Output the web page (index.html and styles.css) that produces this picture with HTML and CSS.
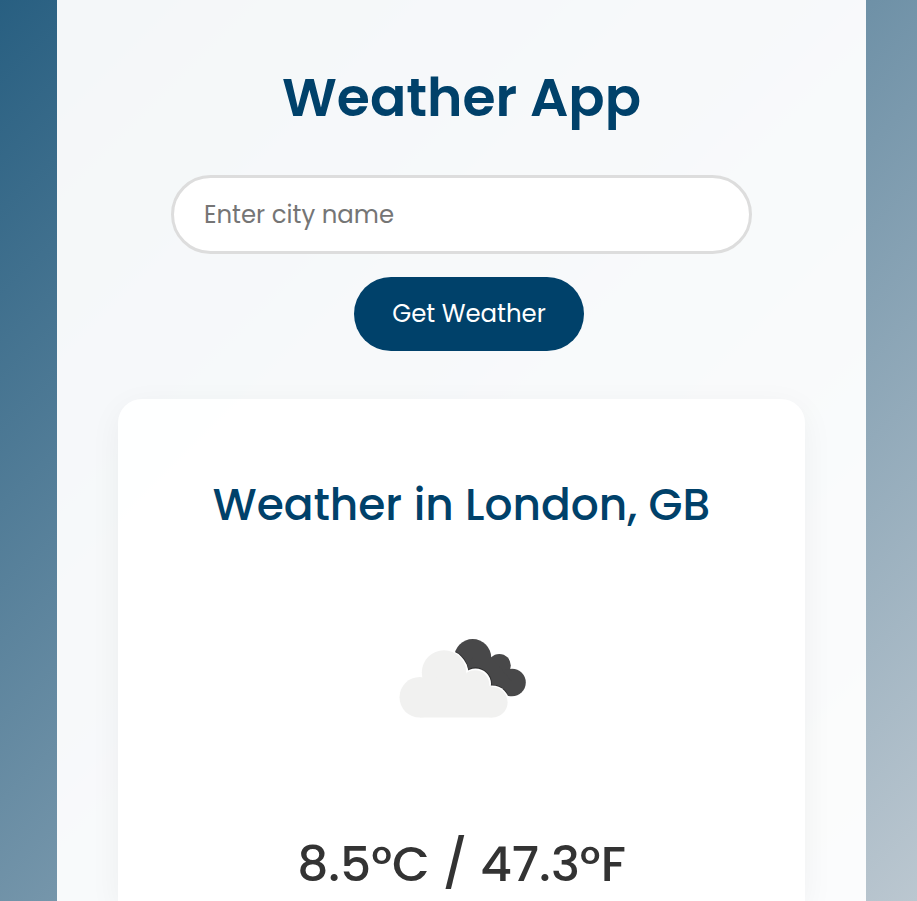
FILE: index.html
```html
<!DOCTYPE html>
<html lang="en">
<head>
<meta charset="utf-8">
<title>Weather App</title>
<link rel="stylesheet" href="styles.css">
</head>
<body>
<main class="container">
  <h1 class="title">Weather App</h1>
  <form class="search">
    <input class="city" type="text" placeholder="Enter city name" aria-label="City">
    <button class="submit" type="button">Get Weather</button>
  </form>
  <section class="card">
    <h2 class="place">Weather in London, GB</h2>
    <svg class="icon" viewBox="0 0 160 110" aria-hidden="true">
      <defs>
        <mask id="gap">
          <rect width="160" height="110" fill="#fff"/>
          <g fill="#000"><circle cx="64" cy="54" r="24.500"/><circle cx="95.500" cy="64" r="15.500"/><circle cx="112" cy="83" r="17.500"/></g>
        </mask>
      </defs>
      <g mask="url(#gap)" fill="#484849">
        <circle cx="92.700" cy="37.500" r="18.500"/>
        <circle cx="119.300" cy="45.500" r="11.500"/>
        <circle cx="132" cy="62.500" r="13.800"/>
        <path d="M93 37H110L119 46L132 62V76L110 75L80 52Z"/>
        <g fill="none" stroke="#2d2d2e" stroke-width="1.500">
          <path d="M75.500 32.200A24.500 24.500 0 0 1 88 50.300"/>
          <path d="M88 50.300A15.500 15.500 0 0 1 111 65.500"/>
          <path d="M111 65.500A17.500 17.500 0 0 1 127 74"/>
        </g>
      </g>
      <g fill="#f1f1f0">
        <circle cx="39.800" cy="77.300" r="20.300"/>
        <circle cx="64" cy="52.500" r="22.200"/>
        <circle cx="95" cy="64.500" r="14.300"/>
        <circle cx="112.300" cy="82.300" r="15.300"/>
        <path d="M40 97.600H112.500V67L85 55L45 58Z"/>
      </g>
    </svg>
    <p class="temp">8.5°C / 47.3°F</p>
  </section>
</main>
</body>
</html>
```
FILE: styles.css
```css
* { box-sizing: border-box; }
body {
  margin: 0;
  height: 901px;
  overflow: hidden;
  display: flex;
  font-family: Poppins, Inter, sans-serif;
  background: linear-gradient(135deg, #285f81, #bbc7d0);
}
.container {
  display: flex;
  flex-direction: column;
  width: 809px;
  height: 901px;
  margin-left: 57px;
  padding: 57px 61px 0;
  background: rgba(255, 255, 255, .95);
}
.title, .place, .temp {
  margin: 0;
  text-align: center;
  white-space: nowrap;
}
.title {
  height: 81px;
  font-size: 53.6px;
  font-weight: 600;
  line-height: 81px;
  color: #00416a;
}
.search {
  display: flex;
  flex-direction: column;
  align-items: center;
  margin-top: 37px;
}
.city {
  width: 581px;
  height: 79px;
  padding: 0 30px;
  border: 3px solid #ddd;
  border-radius: 40px;
  background: #fff;
  font: 400 24.4px Poppins, Inter, sans-serif;
}
.city::placeholder { color: #757575; }
.submit {
  width: 230px;
  height: 74px;
  margin: 23px 0 0 15px;
  padding: 0 0 1px;
  border: 0;
  border-radius: 37px;
  background: #00416a;
  color: #fff;
  font: 400 24.4px Poppins, Inter, sans-serif;
}
.card {
  flex: 1;
  margin-top: 48px;
  padding-top: 73px;
  display: flex;
  flex-direction: column;
  align-items: center;
  border-radius: 24px 24px 0 0;
  background: rgba(255, 255, 255, .9);
  box-shadow: 0 8px 32px rgba(0, 0, 0, .05);
}
.place {
  font-size: 43.9px;
  font-weight: 500;
  line-height: 66px;
  color: #00416a;
}
.icon {
  width: 160px;
  height: 110px;
  margin: 82px 3px 0 0;
}
.temp {
  margin-top: 97px;
  font-size: 48.8px;
  font-weight: 500;
  line-height: 75px;
  color: #333;
}
```
